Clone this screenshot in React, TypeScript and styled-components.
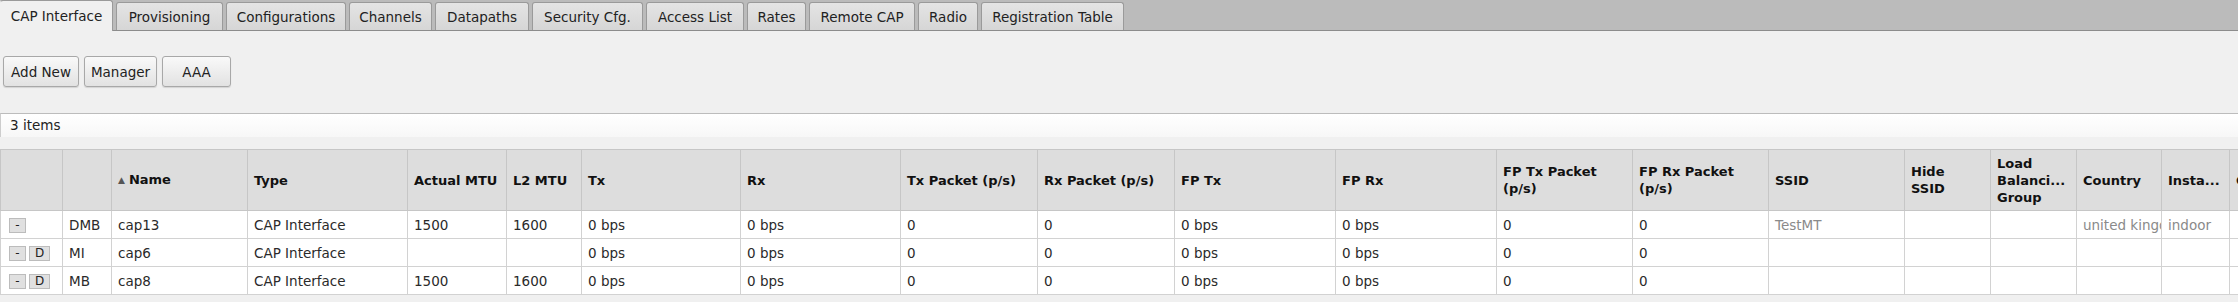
import styled, { createGlobalStyle } from 'styled-components';

const GlobalStyle = createGlobalStyle`
  html, body {
    margin: 0;
    padding: 0;
    overflow: hidden;
  }
  body {
    background: #f0f0f0;
    font-family: "DejaVu Sans", Verdana, sans-serif;
    font-size: 13.5px;
    color: #222;
  }
`;

const TabBar = styled.div`
  display: flex;
  align-items: flex-end;
  gap: 3px;
  height: 30px;
  background: #bbbbbb;
  border-bottom: 1px solid #8c8c8c;
`;

const Tab = styled.div<{ $active?: boolean; $w: number }>`
  box-sizing: border-box;
  display: flex;
  align-items: center;
  justify-content: center;
  flex: none;
  width: ${(p) => p.$w}px;
  height: ${(p) => (p.$active ? 31 : 28)}px;
  margin-bottom: ${(p) => (p.$active ? -1 : 0)}px;
  padding-bottom: ${(p) => (p.$active ? 1 : 0)}px;
  border: 1px solid #9a9a9a;
  border-bottom: none;
  border-left-color: ${(p) => (p.$active ? 'transparent' : '#9a9a9a')};
  border-radius: 3px 3px 0 0;
  background: ${(p) => (p.$active ? '#f0f0f0' : 'linear-gradient(#e4e4e4, #d6d6d6)')};
  color: #222;
  white-space: nowrap;
`;

const Toolbar = styled.div`
  display: flex;
  gap: 5px;
  padding: 25px 0 0 3px;
`;

const Button = styled.button<{ $w: number }>`
  box-sizing: border-box;
  width: ${(p) => p.$w}px;
  height: 31px;
  padding: 0;
  border: 1px solid #a8a8a8;
  border-radius: 3px;
  background: linear-gradient(#f9f9f9, #e2e2e2);
  box-shadow: 0 1px 1px rgba(0, 0, 0, 0.12);
  font: inherit;
  color: #222;
`;

const ItemsBar = styled.div`
  box-sizing: border-box;
  height: 24px;
  margin-top: 26px;
  padding-left: 9px;
  border-top: 1px solid #bcbcbc;
  border-left: 1px solid #cdcdcd;
  background: linear-gradient(#ffffff, #f7f7f7);
  line-height: 23px;
  color: #222;
`;

const TableWrap = styled.div`
  margin-top: 12px;
`;

const Table = styled.table`
  border-collapse: collapse;
  table-layout: fixed;
  box-shadow: 0 2px 2px rgba(0, 0, 0, 0.16);
`;

const Col = styled.col<{ $w: number }>`
  width: ${(p) => p.$w}px;
`;

const Th = styled.th`
  height: 60px;
  padding: 0 6px;
  background: #dddddd;
  border: 1px solid #c6c6c6;
  text-align: left;
  vertical-align: middle;
  font-size: 13px;
  font-weight: bold;
  line-height: 17px;
  color: #111;
  overflow: hidden;
`;

const SortMark = styled.span`
  font-size: 9px;
  color: #555;
  margin-right: 4px;
  vertical-align: 1px;
`;

const Td = styled.td<{ $muted?: boolean }>`
  height: 27px;
  padding: 0 6px;
  background: #fff;
  border: 1px solid #d2d2d2;
  white-space: nowrap;
  overflow: hidden;
  color: ${(p) => (p.$muted ? '#8a8a8a' : '#2a2a2a')};
`;

const ActionCell = styled(Td)`
  padding-left: 8px;
`;

const Mini = styled.button<{ $w: number }>`
  box-sizing: border-box;
  width: ${(p) => p.$w}px;
  height: 15px;
  margin-right: 3px;
  padding: 0;
  border: 1px solid #bcbcbc;
  background: #e0e0e0;
  font-family: inherit;
  font-size: 12px;
  line-height: 13px;
  color: #222;
  vertical-align: middle;
`;

const tabs: [string, number][] = [
  ['CAP Interface', 113],
  ['Provisioning', 107],
  ['Configurations', 120],
  ['Channels', 83],
  ['Datapaths', 94],
  ['Security Cfg.', 111],
  ['Access List', 98],
  ['Rates', 59],
  ['Remote CAP', 106],
  ['Radio', 60],
  ['Registration Table', 143],
];

const widths = [62, 49, 136, 160, 99, 75, 159, 160, 137, 137, 161, 161, 136, 136, 136, 86, 86, 85, 68, 121];

const headers: (string | string[])[] = [
  '',
  '',
  'Name',
  'Type',
  'Actual MTU',
  'L2 MTU',
  'Tx',
  'Rx',
  'Tx Packet (p/s)',
  'Rx Packet (p/s)',
  'FP Tx',
  'FP Rx',
  ['FP Tx Packet', '(p/s)'],
  ['FP Rx Packet', '(p/s)'],
  'SSID',
  ['Hide', 'SSID'],
  ['Load', 'Balanci...', 'Group'],
  'Country',
  'Insta...',
  'Channel',
];

type Row = {
  detail: boolean;
  flags: string;
  name: string;
  mtu: string;
  l2: string;
  ssid: string;
  country: string;
  install: string;
};

const rows: Row[] = [
  { detail: false, flags: 'DMB', name: 'cap13', mtu: '1500', l2: '1600', ssid: 'TestMT', country: 'united kingdom', install: 'indoor' },
  { detail: true, flags: 'MI', name: 'cap6', mtu: '', l2: '', ssid: '', country: '', install: '' },
  { detail: true, flags: 'MB', name: 'cap8', mtu: '1500', l2: '1600', ssid: '', country: '', install: '' },
];

export default function App() {
  return (
    <>
      <GlobalStyle />
      <TabBar>
        {tabs.map(([t, w], i) => (
          <Tab key={t} $w={w} $active={i === 0}>
            {t}
          </Tab>
        ))}
      </TabBar>
      <Toolbar>
        <Button $w={76}>Add New</Button>
        <Button $w={73}>Manager</Button>
        <Button $w={69}>AAA</Button>
      </Toolbar>
      <ItemsBar>3 items</ItemsBar>
      <TableWrap>
        <Table style={{ width: widths.reduce((a, b) => a + b, 0) }}>
          <colgroup>
            {widths.map((w, i) => (
              <Col key={i} $w={w} />
            ))}
          </colgroup>
          <thead>
            <tr>
              {headers.map((h, i) => (
                <Th key={i}>
                  {i === 2 && <SortMark>▲</SortMark>}
                  {Array.isArray(h)
                    ? h.map((line, j) => (
                        <span key={j}>
                          {line}
                          {j < h.length - 1 && <br />}
                        </span>
                      ))
                    : h}
                </Th>
              ))}
            </tr>
          </thead>
          <tbody>
            {rows.map((r) => (
              <tr key={r.name}>
                <ActionCell>
                  <Mini $w={17}>-</Mini>
                  {r.detail && <Mini $w={21}>D</Mini>}
                </ActionCell>
                <Td>{r.flags}</Td>
                <Td>{r.name}</Td>
                <Td>CAP Interface</Td>
                <Td>{r.mtu}</Td>
                <Td>{r.l2}</Td>
                <Td>0 bps</Td>
                <Td>0 bps</Td>
                <Td>0</Td>
                <Td>0</Td>
                <Td>0 bps</Td>
                <Td>0 bps</Td>
                <Td>0</Td>
                <Td>0</Td>
                <Td $muted>{r.ssid}</Td>
                <Td />
                <Td />
                <Td $muted>{r.country}</Td>
                <Td $muted>{r.install}</Td>
                <Td />
              </tr>
            ))}
          </tbody>
        </Table>
      </TableWrap>
    </>
  );
}
